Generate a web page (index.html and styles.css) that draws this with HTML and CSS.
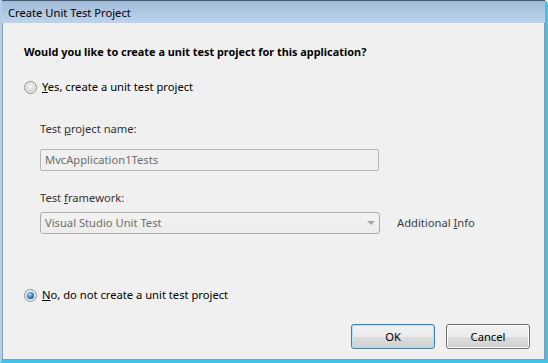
FILE: index.html
```html
<!DOCTYPE html>
<html>

<head>
    <link rel="stylesheet" href="styles.css">
</head>

<body>
    <div class="window">
        <div class="title-bar">Create Unit Test Project</div>
        <div class="dialog">
            <div class="question">Would you like to create a unit test project for this application?</div>

            <label class="radio-row yes-row">
                <span class="radio"></span>
                <span><u>Y</u>es, create a unit test project</span>
            </label>

            <div class="project-group">
                <div class="field-label">Test <u>p</u>roject name:</div>
                <div class="text-box">MvcApplication1Tests</div>

                <div class="field-label framework-label">Test <u>f</u>ramework:</div>
                <div class="framework-row">
                    <div class="combo-box">
                        <span>Visual Studio Unit Test</span>
                        <span class="combo-arrow"></span>
                    </div>
                    <div class="more-info">Additional <u>I</u>nfo</div>
                </div>
            </div>

            <label class="radio-row no-row">
                <span class="radio checked"></span>
                <span><u>N</u>o, do not create a unit test project</span>
            </label>

            <div class="button-row">
                <button class="dialog-button default-button">OK</button>
                <button class="dialog-button">Cancel</button>
            </div>
        </div>
    </div>
</body>

</html>
```

FILE: styles.css
```css
/* Window frame */
body {
    margin: 0;
    background-color: #f0f0f0;
    font-family: 'Noto Sans', sans-serif;
    font-size: 11.2px;
    line-height: 16px;
    color: #000;
}

.window {
    width: 548px;
    height: 363px;
    box-sizing: border-box;
    display: flex;
    flex-direction: column;
    border-left: 2px solid #b4cde8;
    border-right: 3px solid #3fc4e8;
    border-bottom: 3px solid #3fc4e8;
    border-top-right-radius: 5px;
    background-color: #f0f0f0;
}

.title-bar {
    height: 23px;
    box-sizing: border-box;
    padding: 4px 0 0 6px;
    line-height: 16px;
    border-top: 1px solid #4d5866;
    background: linear-gradient(#a2bbd8, #bcd3ec);
    color: #000;
}

.dialog {
    flex: 1;
    display: flex;
    flex-direction: column;
    padding: 21px 0 0 21px;
    border-left: 1px solid #8a9bb0;
    border-right: 1px solid #8a9bb0;
    border-bottom: 1px solid #8a9bb0;
}

.question {
    font-weight: bold;
    font-size: 10.9px;
    height: 16px;
}

/* Radio buttons */
.radio-row {
    display: flex;
    align-items: center;
    gap: 5px;
    height: 16px;
}

.yes-row {
    margin-top: 19px;
}

.no-row {
    margin-top: 53px;
}

.radio {
    width: 11px;
    height: 11px;
    border-radius: 50%;
    border: 1px solid #8e8f8f;
    background: radial-gradient(circle at 50% 40%, #fafafa, #dadada 45%, #c8c8c8 80%);
    box-shadow: inset 0 0 0 1px #f4f4f4;
    position: relative;
}

.radio.checked::after {
    content: "";
    position: absolute;
    left: 2px;
    top: 2px;
    width: 7px;
    height: 7px;
    border-radius: 50%;
    background: radial-gradient(circle at 40% 35%, #a7dcf8, #2a78c0 55%, #13406e);
}

/* Disabled group */
.project-group {
    padding-left: 16px;
    display: flex;
    flex-direction: column;
}

.field-label {
    color: #333;
    height: 16px;
    margin-top: 26px;
}

.framework-label {
    margin-top: 19px;
}

.text-box {
    width: 339px;
    height: 22px;
    box-sizing: border-box;
    margin-top: 12px;
    padding: 2px 0 0 4px;
    border: 1px solid #b5b5b5;
    border-radius: 2px;
    color: #6d6d6d;
    background-color: #f0f0f0;
}

.framework-row {
    display: flex;
    align-items: center;
    margin-top: 6px;
}

.combo-box {
    width: 340px;
    height: 22px;
    box-sizing: border-box;
    display: flex;
    align-items: center;
    justify-content: space-between;
    padding: 0 4px 0 4px;
    border: 1px solid #adadad;
    border-radius: 3px;
    color: #6d6d6d;
    background: linear-gradient(#f3f3f3, #ececec);
}

.combo-arrow {
    width: 0;
    height: 0;
    border-left: 4px solid transparent;
    border-right: 4px solid transparent;
    border-top: 4px solid #a5a5a5;
}

.more-info {
    margin-left: 17px;
    color: #3b3b48;
}

/* Buttons */
.button-row {
    display: flex;
    justify-content: flex-end;
    gap: 11px;
    margin-top: 21px;
    padding-right: 14px;
}

.dialog-button {
    width: 84px;
    height: 25px;
    padding: 0;
    font-family: 'Noto Sans', sans-serif;
    font-size: 11.2px;
    color: #000;
    border: 1px solid #707070;
    border-radius: 3px;
    background: linear-gradient(#f2f2f2 0%, #ebebeb 50%, #dddddd 51%, #cfcfcf 100%);
    box-shadow: inset 0 0 0 1px #fcfcfc;
}

.default-button {
    border-color: #3c7fb1;
    box-shadow: inset 0 0 0 1px #b2e3f7;
}
```
